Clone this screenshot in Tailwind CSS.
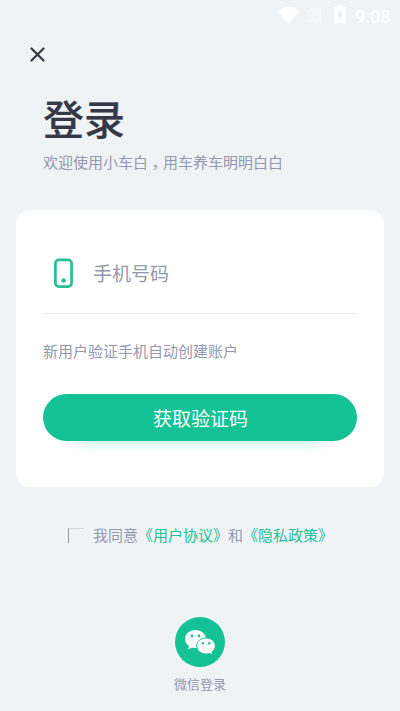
<!DOCTYPE html>
<html lang="zh-CN">
<head>
<meta charset="utf-8">
<meta name="viewport" content="width=device-width, initial-scale=1">
<title>登录</title>
<script src="https://cdn.jsdelivr.net/npm/@tailwindcss/browser@4"></script>
</head>
<body class="bg-[#eff3f6]">
<div class="w-[400px] h-[711px] overflow-hidden flex flex-col bg-[#eff3f6] text-[#9298ad] font-['Noto_Sans_CJK_SC',sans-serif]">
  <header class="h-8 shrink-0 flex items-start justify-end pr-[10px] text-white">
    <svg class="w-[23px] h-[18px] mt-[7px] -mr-px" viewBox="0 0 23 18" fill="currentColor"><path d="M.5 4Q11.500-4 22.500 4L11.500 17.500Z"/></svg>
    <svg class="w-[17px] h-[17px] mt-[7px] ml-[6px] opacity-40" viewBox="0 0 17 17"><path d="M6 1h10v15H3V4Z" fill="currentColor"/><path d="M1 1l15 15" stroke="#eff3f6" stroke-width="1"/><path d="M0 2l14 14" stroke="#fff" stroke-width="1"/></svg>
    <svg class="w-[12px] h-[18px] mt-[5px] ml-[12px]" viewBox="0 0 12 18"><path d="M3.500 0h5v2H12v16H0V2h3.500Z" fill="currentColor"/><path d="M7 4.500L2.800 10.500h2.700L4.800 15.500L9.200 9H6.500Z" fill="#e3ebef"/></svg>
    <span class="ml-[9px] mt-[5px] text-[18px] leading-[24px] w-[35px] whitespace-nowrap font-medium font-['Roboto',sans-serif]">9:08</span>
  </header>
  <button class="w-[16px] h-[16px] ml-[30px] mt-[15px] shrink-0" aria-label="关闭">
    <svg class="block w-[16px] h-[16px]" viewBox="0 0 16 16" fill="none" stroke="#343847" stroke-width="2.200" stroke-linecap="round"><path d="M1.500 1.500l12 12M13.500 1.500l-12 12"/></svg>
  </button>
  <h1 class="ml-[43px] mt-[26px] h-[56px] text-[41px] leading-[56px] font-medium text-[#343847] [-webkit-text-stroke:0.15px_#343847]">登录</h1>
  <p class="ml-[43px] mt-[6px] h-[22px] text-[15px] leading-[22px] whitespace-nowrap">欢迎使用小车白<span class="px-[3.75px] [font-feature-settings:'halt']">，</span>用车养车明明白白</p>
  <main class="mx-4 mt-[37px] h-[277px] shrink-0 rounded-[14px] bg-white px-[27px]">
    <div class="h-[104px] border-b border-[#eaebed] flex items-center pt-[23px] pl-[11px]">
      <svg class="w-[19px] h-[30px]" viewBox="0 0 19 30"><rect x="1.400" y="1.900" width="16.200" height="26.700" rx="3.500" fill="none" stroke="#28bf98" stroke-width="2.700"/><circle cx="9.500" cy="22.500" r="2.300" fill="#28bf98"/></svg>
      <span class="ml-[20px] text-[19px] leading-[28px]">手机号码</span>
    </div>
    <p class="mt-[26px] text-[15px] leading-[22px]">新用户验证手机自动创建账户</p>
    <div class="mt-[32px] relative">
      <div class="absolute left-[34px] right-[34px] top-[25px] h-[20px] rounded-full shadow-[0_4px_12px_rgba(20,194,150,0.32)]"></div>
      <button class="relative w-full h-[47px] rounded-full bg-[#14c296] text-white text-[19px] leading-[47px] pl-px">获取验证码</button>
    </div>
  </main>
  <div class="mt-[37px] ml-[68px] h-[22px] flex items-center text-[15px] leading-[22px] whitespace-nowrap">
    <span class="w-[16px] h-[15px] border-l border-t border-l-[#9298ad] border-t-[#d1d6dd]"></span>
    <span class="ml-[9px]">我同意<a class="text-[#20c197]">《用户协议》</a>和<a class="text-[#20c197]">《隐私政策》</a></span>
  </div>
  <div class="mt-[71px] flex flex-col items-center">
    <svg class="w-[50px] h-[50px]" viewBox="0 0 50 50"><circle cx="25" cy="25" r="25" fill="#14c296"/>
      <path d="M20.500 13C14.500 13 10 17 10 22c0 3 1.500 5.300 4 7l-1 3.500 4-2.100c1.100.4 2.300.6 3.500.6C26.500 31 31 27 31 22s-4.500-9-10.500-9Z" fill="#fff"/>
      <path d="M31 21c-5.200 0-9.300 3.500-9.300 8s4.100 8 9.300 8c1.300 0 2.500-.2 3.500-.6l3.300 1.800-.9-3c2.100-1.500 3.400-3.700 3.400-6.200 0-4.500-4.100-8-9.300-8Z" fill="#fff" stroke="#14c296" stroke-width="1"/>
      <g fill="#14c296"><circle cx="17" cy="19" r="1.400"/><circle cx="24" cy="19" r="1.400"/><circle cx="27.800" cy="26.200" r="1.200"/><circle cx="34.200" cy="26.200" r="1.200"/></g></svg>
    <span class="mt-[7px] text-[13px] leading-[20px]">微信登录</span>
  </div>
</div>
</body>
</html>
